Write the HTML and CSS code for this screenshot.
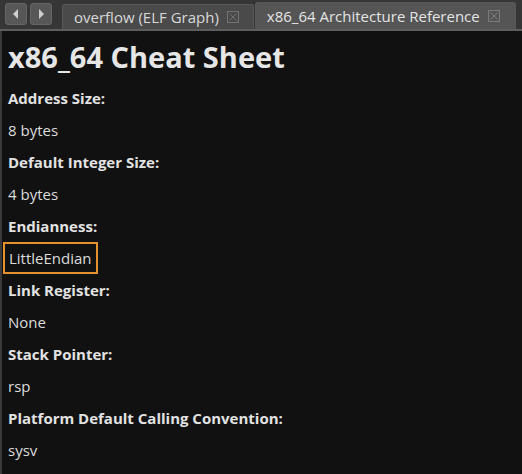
FILE: index.html
```html
<!DOCTYPE html>
<html>
<head>
<meta charset="utf-8">
<link rel="stylesheet" href="styles.css">
</head>
<body>
<div class="tabbar">
  <div class="navbtn"><svg width="8" height="12" viewBox="0 0 8 12"><path d="M6 1 L1 6 L6 11 Z" fill="#cfcfcf"/></svg></div>
  <div class="navbtn"><svg width="8" height="12" viewBox="0 0 8 12"><path d="M2 1 L7 6 L2 11 Z" fill="#cfcfcf"/></svg></div>
  <div class="tab">overflow (ELF Graph)<span class="close"><svg width="12" height="12" viewBox="0 0 12 12"><rect x="0.5" y="0.5" width="11" height="11" fill="none" stroke="#727272"/><path d="M2.5 2.5 L9.5 9.5 M9.5 2.5 L2.5 9.5" stroke="#727272"/></svg></span></div>
  <div class="tab active">x86_64 Architecture Reference<span class="close"><svg width="12" height="12" viewBox="0 0 12 12"><rect x="0.5" y="0.5" width="11" height="11" fill="none" stroke="#7c7c7c"/><path d="M2.5 2.5 L9.5 9.5 M9.5 2.5 L2.5 9.5" stroke="#7c7c7c"/></svg></span></div>
</div>
<div class="content">
  <h1 class="title">x86_64 Cheat Sheet</h1>
  <div class="label">Address Size:</div>
  <div class="value">8 bytes</div>
  <div class="label">Default Integer Size:</div>
  <div class="value">4 bytes</div>
  <div class="label">Endianness:</div>
  <div class="value"><span class="focus">LittleEndian</span></div>
  <div class="label">Link Register:</div>
  <div class="value">None</div>
  <div class="label">Stack Pointer:</div>
  <div class="value">rsp</div>
  <div class="label">Platform Default Calling Convention:</div>
  <div class="value">sysv</div>
</div>
</body>
</html>
```

FILE: styles.css
```css
html, body {
  margin: 0;
  padding: 0;
  background: #111111;
  font-family: "Open Sans", "Noto Sans", sans-serif;
  color: #e0e0e0;
}
.tabbar {
  height: 29px;
  background: #363636;
  display: flex;
  align-items: flex-end;
  border-bottom: 2px solid #5e5e5e;
}
.navbtn {
  width: 20px;
  height: 20px;
  margin-left: 5px;
  margin-bottom: 4px;
  background: #575757;
  border: 1px solid #666;
  border-radius: 3px;
  display: flex;
  align-items: center;
  justify-content: center;
}
.navbtn + .navbtn { margin-left: 3px; }
.tab {
  height: 24px;
  padding: 0 14px 0 11px;
  background: #4a4a4a;
  border: 1px solid #585858;
  border-bottom: none;
  border-radius: 3px 3px 0 0;
  font-size: 15px;
  color: #d8d8d8;
  display: flex;
  align-items: center;
  gap: 8px;
}
.navbtn + .tab { margin-left: 10px; }
.tab.active {
  height: 26px;
  background: #555555;
  color: #e4e4e4;
  margin-left: 1px;
  padding-right: 15px;
}
.close { display: flex; }
.content {
  border-left: 2px solid #3a3a3a;
  padding-left: 6px;
  min-height: 443px;
}
.title {
  margin: 0;
  height: 51px;
  line-height: 51px;
  font-size: 29px;
  font-weight: 700;
  color: #e6e6e6;
}
.label, .value {
  height: 32px;
  line-height: 32px;
  font-size: 15px;
}
.label { font-weight: 700; color: #e2e2e2; }
.value { color: #dcdcdc; }
.focus {
  display: inline-block;
  height: 28px;
  line-height: 28px;
  margin-left: -5px;
  padding: 0 4px;
  border: 2px solid #e3922e;
}
```
